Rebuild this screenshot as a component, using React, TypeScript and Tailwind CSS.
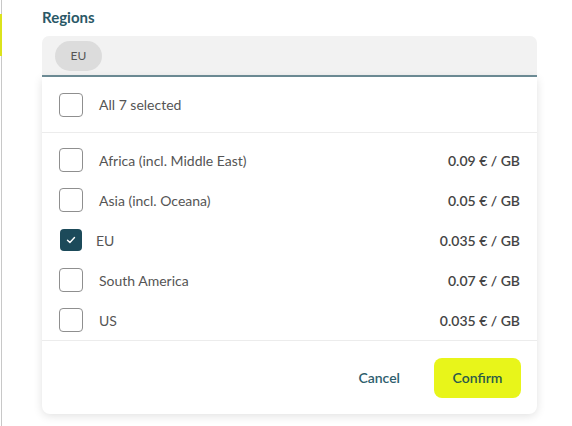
import { useState } from "react";

type Region = { name: string; price: string };

const regions: Region[] = [
  { name: "Africa (incl. Middle East)", price: "0.09 € / GB" },
  { name: "Asia (incl. Oceana)", price: "0.05 € / GB" },
  { name: "EU", price: "0.035 € / GB" },
  { name: "South America", price: "0.07 € / GB" },
  { name: "US", price: "0.035 € / GB" },
];

function Check({ checked }: { checked: boolean }) {
  if (checked) {
    return (
      <span className="flex h-[22px] w-[22px] items-center justify-center rounded-[4px] bg-[#1c4a5a]">
        <svg width="12" height="12" viewBox="0 0 12 12" fill="none">
          <path d="M2.5 6.2l2.4 2.3 4.6-4.9" stroke="white" strokeWidth="1.4" strokeLinecap="round" strokeLinejoin="round" />
        </svg>
      </span>
    );
  }
  return <span className="block h-6 w-6 rounded-[4px] border border-[#8f8f8f] bg-white" />;
}

export default function App() {
  const [selected] = useState<string[]>(["EU"]);

  return (
    <div className="flex h-[426px] w-[572px] bg-white" style={{ fontFamily: "Lato, 'Open Sans', sans-serif" }}>
      {/* left page edge */}
      <div className="flex w-[2px] flex-col border-r border-[#c8c8c8]">
        <div className="mt-[14px] h-[42px] w-[2px] bg-[#dbe31c]" />
      </div>

      <div className="flex w-[535px] flex-col pl-10 pt-[6px]">
        <div className="text-[15px] font-bold leading-[22px] text-[#2a5867]">Regions</div>

        <div className="mt-2 flex h-[41px] items-center rounded-t-[7px] border-b-2 border-[#6f8e98] bg-[#f2f2f2] pl-[13px]">
          <span className="flex h-[30px] w-[47px] items-center justify-center rounded-full bg-[#dcdcdc] text-[12px] text-[#555]">
            EU
          </span>
        </div>

        <div className="flex flex-col rounded-b-[8px] bg-white shadow-[0_2px_10px_rgba(0,0,0,0.12)]">
          <div className="flex h-[56px] items-center border-b border-[#ececec] pl-[17px]">
            <Check checked={false} />
            <span className="ml-4 text-[14px] text-[#555]">All 7 selected</span>
          </div>

          <div className="flex flex-col border-b border-[#ececec] pt-[7px]">
            {regions.map((r) => {
              const on = selected.includes(r.name);
              return (
                <div key={r.name} className="flex h-10 items-center pl-[17px] pr-[17px]">
                  <span className={on ? "ml-px" : ""}>
                    <Check checked={on} />
                  </span>
                  <span className={`${on ? "ml-[14px]" : "ml-4"} text-[14px] text-[#555]`}>{r.name}</span>
                  <span className="ml-auto text-[14px] font-semibold text-[#444]">{r.price}</span>
                </div>
              );
            })}
          </div>

          <div className="flex h-[73px] items-center justify-end gap-[34px] pr-[16px]">
            <button className="text-[14px] font-semibold text-[#2e5e6c]">Cancel</button>
            <button className="h-10 w-[87px] rounded-[8px] bg-[#e8f51a] text-[14px] font-semibold text-[#2b5a4a]">
              Confirm
            </button>
          </div>
        </div>
      </div>
    </div>
  );
}
